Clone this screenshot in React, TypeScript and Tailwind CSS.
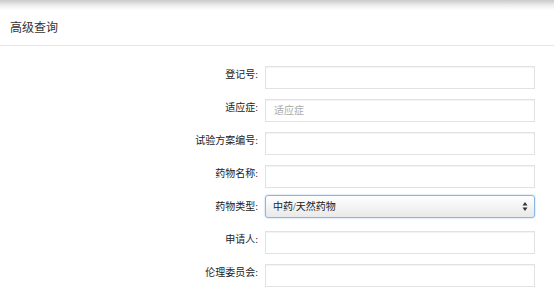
import React from "react";

const fields = [
  { label: "登记号:", placeholder: "" },
  { label: "适应症:", placeholder: "适应症" },
  { label: "试验方案编号:", placeholder: "" },
  { label: "药物名称:", placeholder: "" },
  { label: "药物类型:", select: true },
  { label: "申请人:", placeholder: "" },
  { label: "伦理委员会:", placeholder: "" },
];

const serif = "font-['Liberation_Serif','Noto_Sans_CJK_SC',serif]";

const App = () => {
  return (
    <div className="w-[554px] h-[291px] overflow-hidden bg-white">
      <div className="h-[10px] bg-gradient-to-b from-[#c9c9c9] via-[#ececec] to-white" />
      <div className="h-[36px] border-b border-[#e6e6e6] flex items-center pl-[10px] pb-[1px]">
        <span className="text-[12px] text-[#333] font-['Noto_Sans_CJK_SC',sans-serif]">
          高级查询
        </span>
      </div>
      <div className="pt-[17px] flex flex-col gap-[10px]">
        {fields.map((f) => (
          <div key={f.label} className="flex items-center h-[23px]">
            <label
              className={`w-[259px] text-right pr-[1px] text-[10px] leading-[23px] text-[#222] ${serif}`}
            >
              {f.label}
            </label>
            <div className="ml-[6px] w-[270px] h-[23px]">
              {f.select ? (
                <div className="relative h-full rounded-[3px] border border-[#8ab6e6] bg-gradient-to-b from-white to-[#e9e9e9] shadow-[0_0_2px_#9cc4ef] flex items-center pl-[7px]">
                  <span className={`text-[10px] text-[#222] ${serif}`}>中药/天然药物</span>
                  <span className="absolute right-[6px] top-[5px] flex flex-col items-center leading-none text-[#333]">
                    <svg width="6" height="11" viewBox="0 0 6 11">
                      <path d="M3 1 L5.5 4.5 H0.5 Z" fill="#333" />
                      <path d="M3 10 L5.5 6.5 H0.5 Z" fill="#333" />
                    </svg>
                  </span>
                </div>
              ) : (
                <input
                  className={`w-full h-full border border-[#e2e2e2] shadow-[inset_0_1px_1px_rgba(0,0,0,0.05)] px-[8px] text-[10px] outline-none placeholder:text-[#aaa] ${serif}`}
                  placeholder={f.placeholder}
                />
              )}
            </div>
          </div>
        ))}
      </div>
    </div>
  );
};

export default App;
